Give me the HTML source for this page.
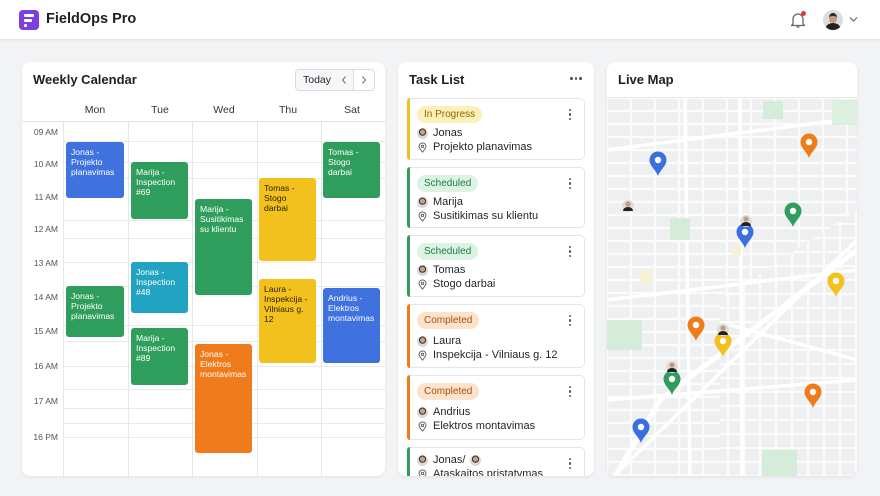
<!DOCTYPE html>
<html><head><meta charset="utf-8">
<style>
*{box-sizing:border-box;margin:0;padding:0}
body{width:880px;height:496px;background:#f2f3f5;font-family:"Liberation Sans",sans-serif;color:#1f2328;position:relative;overflow:hidden}
.hdr{position:absolute;left:0;top:0;width:880px;height:40px;background:#fff;border-bottom:1px solid #e4e6ea;box-shadow:0 1px 3px rgba(0,0,0,.05)}
.card{position:absolute;background:#fff;border-radius:8px;box-shadow:0 1px 3px rgba(0,0,0,.08);overflow:hidden}
.title{position:absolute;font-size:13px;font-weight:600;color:#1c1f24}
.ab{position:absolute}
.hl{position:absolute;left:0;width:363px;height:1px;background:#e8eaed}
.vl{position:absolute;top:59px;bottom:0;width:1px;background:#e4e6ea}
.tm{position:absolute;left:0;width:36px;text-align:right;font-size:8.5px;color:#555}
.ev{position:absolute;border-radius:3px;color:#fff;font-size:8.6px;line-height:10px;padding:5px 5px}
.day{position:absolute;top:42px;font-size:10.5px;color:#333;text-align:center;width:64px}
.task{position:absolute;left:9px;width:178px;border:1px solid #e3e5e8;border-radius:5px;background:#fff}
.task .bar{position:absolute;left:-1px;top:-1px;bottom:-1px;width:3px;border-radius:3px 0 0 3px}
.badge{position:absolute;left:9px;top:7px;font-size:10px;padding:3px 7px;border-radius:9px}
.dots{position:absolute;right:12px;top:10px;width:3px}
.dots i{display:block;width:2.4px;height:2.4px;background:#555;border-radius:50%;margin-bottom:2px}
.ln{position:absolute;left:9px;font-size:11px;color:#1f2328;display:flex;align-items:center;gap:5px;white-space:nowrap}
.av{width:11px;height:11px;border-radius:50%;background:radial-gradient(circle at 50% 38%,#c9a189 0 28%,#333 30% 40%,#d8d8d8 42%);display:inline-block}
.pn{width:11px;height:11px;display:inline-block}
</style></head><body>
<div class="hdr">
 <div class="ab" style="left:19px;top:10px;width:20px;height:20px;background:#7b3fe0;border-radius:4px">
  <div class="ab" style="left:5px;top:4px;width:10px;height:3px;background:#fff;border-radius:1px"></div>
  <div class="ab" style="left:5px;top:9px;width:8px;height:3px;background:#fff;border-radius:1px"></div>
  <div class="ab" style="left:5px;top:14px;width:3px;height:3px;background:#fff;border-radius:1px"></div>
 </div>
 <div class="ab" style="left:46px;top:11px;font-size:14.5px;font-weight:600;color:#1c1f24">FieldOps Pro</div>
 <svg class="ab" style="left:788px;top:10px" width="20" height="20" viewBox="0 0 20 20"><path d="M5 14 V9 a5 5 0 0 1 10 0 V14 l1.5 1.5 H3.5Z" fill="none" stroke="#666" stroke-width="1.3" stroke-linejoin="round"/><path d="M8.5 17 h3" stroke="#666" stroke-width="1.3"/><circle cx="15.5" cy="3.5" r="2.5" fill="#e53935"/></svg>
 <div class="ab" style="left:823px;top:10px;width:20px;height:20px;border-radius:50%;background:#ddd;overflow:hidden"><div class="ab" style="left:6px;top:3px;width:8px;height:10px;border-radius:45%;background:#c49a80;border-top:3px solid #2a2a2a"></div><div class="ab" style="left:3px;top:13px;width:14px;height:9px;border-radius:50% 50% 0 0;background:#222"></div></div>
 <svg class="ab" style="left:849px;top:16px" width="9" height="7"><path d="M1 1.5 L4.5 5 L8 1.5" fill="none" stroke="#666" stroke-width="1.2"/></svg>
</div>

<!-- calendar -->
<div class="card" style="left:22px;top:62px;width:363px;height:414px">
 <div class="title" style="left:11px;top:10px">Weekly Calendar</div>
 <div class="ab" style="left:273px;top:7px;width:80px;height:22px;border:1px solid #d8dbe0;border-radius:4px;background:#f6f7f8;overflow:hidden">
  <div class="ab" style="left:7px;top:4px;font-size:10.5px;line-height:13px">Today</div>
  <svg class="ab" style="left:44px;top:5px" width="8" height="10"><path d="M5.5 1.5 L2.5 5 L5.5 8.5" fill="none" stroke="#777" stroke-width="1.1"/></svg>
  <div class="ab" style="left:57px;top:0;width:22px;height:20px;background:#fff;border-left:1px solid #d8dbe0"></div>
  <svg class="ab" style="left:64px;top:5px" width="8" height="10"><path d="M2.5 1.5 L5.5 5 L2.5 8.5" fill="none" stroke="#777" stroke-width="1.1"/></svg>
 </div>
 <div class="day" style="left:41px">Mon</div><div class="day" style="left:106px">Tue</div><div class="day" style="left:170px">Wed</div><div class="day" style="left:234px">Thu</div><div class="day" style="left:298px">Sat</div>
 <div class="hl" style="top:59px;background:#e1e3e7"></div>
 <div class="hl" style="top:79px;left:41px;width:322px"></div><div class="hl" style="top:100px;left:41px;width:322px"></div><div class="hl" style="top:116px;left:41px;width:322px"></div><div class="hl" style="top:158px;left:41px;width:322px"></div><div class="hl" style="top:176px;left:41px;width:322px"></div><div class="hl" style="top:200px;left:41px;width:322px"></div><div class="hl" style="top:224px;left:41px;width:322px"></div><div class="hl" style="top:263px;left:41px;width:322px"></div><div class="hl" style="top:279px;left:41px;width:322px"></div><div class="hl" style="top:304px;left:41px;width:322px"></div><div class="hl" style="top:327px;left:41px;width:322px"></div><div class="hl" style="top:346px;left:41px;width:322px"></div><div class="hl" style="top:361px;left:41px;width:322px"></div><div class="hl" style="top:375px;left:41px;width:322px"></div>
 <div class="vl" style="left:41px"></div><div class="vl" style="left:106px"></div><div class="vl" style="left:170px"></div><div class="vl" style="left:235px"></div><div class="vl" style="left:299px"></div>
 <div class="tm" style="top:65px">09 AM</div><div class="tm" style="top:97px">10 AM</div><div class="tm" style="top:130px">11 AM</div><div class="tm" style="top:162px">12 AM</div><div class="tm" style="top:196px">13 AM</div><div class="tm" style="top:230px">14 AM</div><div class="tm" style="top:264px">15 AM</div><div class="tm" style="top:299px">16 AM</div><div class="tm" style="top:334px">17 AM</div><div class="tm" style="top:370px">16 PM</div>
 <div class="ev" style="left:44px;top:80px;width:58px;height:56px;background:#3f72df">Jonas -<br>Projekto<br>planavimas</div>
 <div class="ev" style="left:109px;top:100px;width:57px;height:57px;background:#2f9e5c">Marija -<br>Inspection<br>#69</div>
 <div class="ev" style="left:173px;top:137px;width:57px;height:96px;background:#2f9e5c">Marija -<br>Susitikimas<br>su klientu</div>
 <div class="ev" style="left:237px;top:116px;width:57px;height:83px;background:#f3c11d;color:#2a2200">Tomas -<br>Stogo<br>darbai</div>
 <div class="ev" style="left:301px;top:80px;width:57px;height:56px;background:#2f9e5c">Tomas -<br>Stogo<br>darbai</div>
 <div class="ev" style="left:109px;top:200px;width:57px;height:51px;background:#23a3c2">Jonas -<br>Inspection<br>#48</div>
 <div class="ev" style="left:44px;top:224px;width:58px;height:51px;background:#2f9e5c">Jonas -<br>Projekto<br>planavimas</div>
 <div class="ev" style="left:237px;top:217px;width:57px;height:84px;background:#f3c11d;color:#2a2200">Laura -<br>Inspekcija -<br>Vilniaus g. 12</div>
 <div class="ev" style="left:301px;top:226px;width:57px;height:75px;background:#3f72df">Andrius -<br>Elektros<br>montavimas</div>
 <div class="ev" style="left:109px;top:266px;width:57px;height:57px;background:#2f9e5c">Marija -<br>Inspection<br>#89</div>
 <div class="ev" style="left:173px;top:282px;width:57px;height:109px;background:#f07b1c">Jonas -<br>Elektros<br>montavimas</div>
</div>

<svg width="0" height="0" style="position:absolute"><defs><symbol id="loc" viewBox="0 0 12 12"><path d="M6 11 C4 8.5 2.2 6.8 2.2 4.8 A3.8 3.8 0 0 1 9.8 4.8 C9.8 6.8 8 8.5 6 11Z" fill="none" stroke="#555" stroke-width="1"/><circle cx="6" cy="4.8" r="1.3" fill="none" stroke="#555" stroke-width="1"/></symbol></defs></svg>

<!-- tasks -->
<div class="card" style="left:398px;top:62px;width:196px;height:414px">
 <div class="title" style="left:11px;top:10px">Task List</div>
 <div class="ab" style="left:172px;top:15px;width:12px;display:flex;gap:2px"><i style="width:2.5px;height:2.5px;border-radius:50%;background:#555"></i><i style="width:2.5px;height:2.5px;border-radius:50%;background:#555"></i><i style="width:2.5px;height:2.5px;border-radius:50%;background:#555"></i></div>
 <div class="task" style="top:36px;height:62px"><div class="bar" style="background:#f2c01e"></div><div class="badge" style="background:#fdefb8;color:#8a6a00">In Progress</div><div class="dots"><i></i><i></i><i></i></div>
  <div class="ln" style="top:28px"><span class="av"></span>Jonas</div><div class="ln" style="top:42px"><svg class="pn"><use href="#loc"/></svg>Projekto planavimas</div></div>
 <div class="task" style="top:105px;height:61px"><div class="bar" style="background:#2f9e5c"></div><div class="badge" style="background:#dcf3e3;color:#1e7a43">Scheduled</div><div class="dots"><i></i><i></i><i></i></div>
  <div class="ln" style="top:28px"><span class="av"></span>Marija</div><div class="ln" style="top:42px"><svg class="pn"><use href="#loc"/></svg>Susitikimas su klientu</div></div>
 <div class="task" style="top:173px;height:62px"><div class="bar" style="background:#2f9e5c"></div><div class="badge" style="background:#dcf3e3;color:#1e7a43">Scheduled</div><div class="dots"><i></i><i></i><i></i></div>
  <div class="ln" style="top:28px"><span class="av"></span>Tomas</div><div class="ln" style="top:42px"><svg class="pn"><use href="#loc"/></svg>Stogo darbai</div></div>
 <div class="task" style="top:242px;height:64px"><div class="bar" style="background:#ef7b1a"></div><div class="badge" style="background:#fde2cc;color:#a4510f">Completed</div><div class="dots"><i></i><i></i><i></i></div>
  <div class="ln" style="top:30px"><span class="av"></span>Laura</div><div class="ln" style="top:44px"><svg class="pn"><use href="#loc"/></svg>Inspekcija - Vilniaus g. 12</div></div>
 <div class="task" style="top:313px;height:65px"><div class="bar" style="background:#ef7b1a"></div><div class="badge" style="background:#fde2cc;color:#a4510f">Completed</div><div class="dots"><i></i><i></i><i></i></div>
  <div class="ln" style="top:30px"><span class="av"></span>Andrius</div><div class="ln" style="top:44px"><svg class="pn"><use href="#loc"/></svg>Elektros montavimas</div></div>
 <div class="task" style="top:385px;height:40px"><div class="bar" style="background:#2f9e5c"></div><div class="dots"><i></i><i></i><i></i></div>
  <div class="ln" style="top:6px"><span class="av"></span>Jonas/<span class="av"></span></div><div class="ln" style="top:20px"><svg class="pn"><use href="#loc"/></svg>Ataskaitos pristatymas</div></div>
</div>

<!-- map -->
<div class="card" style="left:607px;top:62px;width:250px;height:414px">
 <div class="title" style="left:11px;top:10px">Live Map</div>
 <div class="ab" style="left:0;top:35px;width:250px;height:1px;background:#e6e8eb"></div>
 <svg class="ab" style="left:0;top:36px" width="250" height="378" viewBox="607 98 250 378">
  <defs>
   <pattern id="blk" x="607" y="98" width="24" height="13" patternUnits="userSpaceOnUse"><rect width="24" height="13" fill="#fbfbfc"/><rect x="1.2" y="1.2" width="21.6" height="10.6" fill="#eeeff1"/></pattern>
   <pattern id="blk2" x="600" y="98" width="16" height="14" patternUnits="userSpaceOnUse"><rect width="16" height="14" fill="#fbfbfc"/><rect x="1.2" y="1.2" width="13.6" height="11.6" fill="#eeeff1"/></pattern>
   <g id="pin"><path d="M0 0 C-2 -6 -8.5 -10 -8.5 -16 A8.5 8.5 0 1 1 8.5 -16 C8.5 -10 2 -6 0 0Z"/><circle cx="0" cy="-16" r="3.2" fill="#fff"/></g>
  </defs>
  <rect x="607" y="98" width="250" height="378" fill="url(#blk)"/>
  <polygon points="720,300 857,210 857,476 720,476" fill="url(#blk2)"/>
  <path d="M607 150 L857 118 M607 300 L857 270 M620 470 L857 240 M740 98 L742 476 M685 98 L690 476 M607 400 L857 380 M730 325 L857 360" stroke="#fff" stroke-width="3.5" fill="none"/>
  <path d="M615 476 L660 400 L857 250" stroke="#fff" stroke-width="5" fill="none"/>
  <rect x="763" y="101" width="20" height="18" fill="#d6ecda"/><rect x="670" y="218" width="20" height="22" fill="#d6ecda"/><rect x="607" y="320" width="35" height="30" fill="#d6ecda"/><rect x="832" y="100" width="25" height="25" fill="#dcefe0"/><rect x="762" y="450" width="35" height="26" fill="#d6ecda"/><rect x="640" y="270" width="12" height="14" fill="#f6f0d6"/><rect x="732" y="245" width="9" height="10" fill="#f6f0d6"/>
  <g fill="#3b6fe0"><use href="#pin" x="658" y="176"/><use href="#pin" x="745" y="248"/><use href="#pin" x="641" y="443"/></g>
  <g fill="#ef7b1a"><use href="#pin" x="809" y="158"/><use href="#pin" x="696" y="341"/><use href="#pin" x="813" y="408"/></g>
  <g fill="#2f9e5c"><use href="#pin" x="793" y="227"/><use href="#pin" x="672" y="395"/></g>
  <g fill="#f3c11d"><use href="#pin" x="836" y="297"/><use href="#pin" x="723" y="357"/></g>
  <g><circle cx="628" cy="206" r="6" fill="#ddd"/><circle cx="628" cy="204" r="2.6" fill="#c49a80"/><path d="M623 211 a5 4 0 0 1 10 0Z" fill="#222"/>
  <circle cx="746" cy="221" r="6" fill="#ddd"/><circle cx="746" cy="219" r="2.6" fill="#c49a80"/><path d="M741 226 a5 4 0 0 1 10 0Z" fill="#222"/>
  <circle cx="723" cy="330" r="6" fill="#ddd"/><circle cx="723" cy="328" r="2.6" fill="#c49a80"/><path d="M718 335 a5 4 0 0 1 10 0Z" fill="#222"/>
  <circle cx="672" cy="367" r="6" fill="#ddd"/><circle cx="672" cy="365" r="2.6" fill="#c49a80"/><path d="M667 372 a5 4 0 0 1 10 0Z" fill="#222"/></g>
 </svg>
</div>
</body></html>
